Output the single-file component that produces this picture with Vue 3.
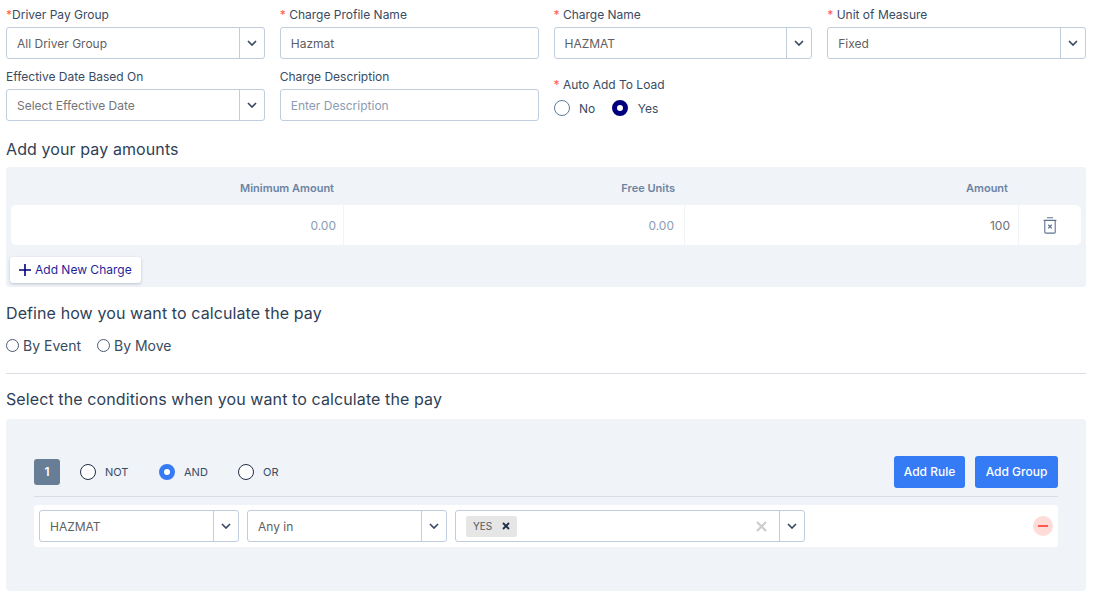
<script setup>
const chevron = 'M1 1l4 4 4-4'
</script>

<template>
  <div class="page">
    <div class="form-grid">
      <div class="field">
        <label class="label"><span class="req">*</span>Driver Pay Group</label>
        <div class="select"><span class="value">All Driver Group</span><span class="arrow"><svg width="10" height="6" viewBox="0 0 10 6"><path :d="chevron" /></svg></span></div>
      </div>
      <div class="field">
        <label class="label"><span class="req">* </span>Charge Profile Name</label>
        <div class="input"><span class="value">Hazmat</span></div>
      </div>
      <div class="field">
        <label class="label"><span class="req">* </span>Charge Name</label>
        <div class="select"><span class="value">HAZMAT</span><span class="arrow"><svg width="10" height="6" viewBox="0 0 10 6"><path :d="chevron" /></svg></span></div>
      </div>
      <div class="field">
        <label class="label"><span class="req">* </span>Unit of Measure</label>
        <div class="select"><span class="value">Fixed</span><span class="arrow"><svg width="10" height="6" viewBox="0 0 10 6"><path :d="chevron" /></svg></span></div>
      </div>
      <div class="field">
        <label class="label">Effective Date Based On</label>
        <div class="select"><span class="value muted">Select Effective Date</span><span class="arrow"><svg width="10" height="6" viewBox="0 0 10 6"><path :d="chevron" /></svg></span></div>
      </div>
      <div class="field">
        <label class="label">Charge Description</label>
        <div class="input"><span class="value placeholder">Enter Description</span></div>
      </div>
      <div class="field auto-field">
        <label class="label"><span class="req">* </span>Auto Add To Load</label>
        <div class="auto-radios">
          <span class="opt"><i class="radio big"></i>No</span>
          <span class="opt"><i class="radio big navy"></i>Yes</span>
        </div>
      </div>
    </div>

    <h3 class="heading pay-heading">Add your pay amounts</h3>
    <section class="charges">
      <div class="charge-cols charge-head">
        <span>Minimum Amount</span>
        <span>Free Units</span>
        <span class="amount-head">Amount</span>
        <span></span>
      </div>
      <div class="charge-cols charge-row">
        <span class="num first">0.00</span>
        <span class="num second">0.00</span>
        <span class="num dark">100</span>
        <span class="trash">
          <svg width="14" height="17" viewBox="0 0 14 17" fill="none" stroke="#5f7390" stroke-width="1.1">
            <path d="M4 .8h6M.6 3.4h12.8M1.8 3.4v11.8c0 .5.4.9.9.9h8.6c.5 0 .9-.4.9-.9V3.4" />
            <path d="M5.3 7.8l3.4 3.6M8.7 7.8l-3.4 3.6" stroke-width="1.3" />
          </svg>
        </span>
      </div>
      <button class="add-charge" type="button">
        <svg width="12" height="12" viewBox="0 0 12 12"><path d="M6 0v12M0 6h12" stroke="#00007f" stroke-width="1.6" /></svg>
        <span class="add-text">Add New Charge</span>
      </button>
    </section>

    <h3 class="heading define-heading">Define how you want to calculate the pay</h3>
    <div class="by-radios">
      <span class="by"><i class="radio small"></i>By Event</span>
      <span class="by"><i class="radio small"></i>By Move</span>
    </div>
    <hr class="rule" />

    <h3 class="heading cond-heading">Select the conditions when you want to calculate the pay</h3>
    <section class="builder">
      <div class="builder-top">
        <span class="badge">1</span>
        <span class="cond"><i class="radio cond-radio"></i>NOT</span>
        <span class="cond"><i class="radio cond-radio blue"></i>AND</span>
        <span class="cond"><i class="radio cond-radio"></i>OR</span>
        <span class="actions">
          <button class="primary rule-btn" type="button">Add Rule</button>
          <button class="primary group-btn" type="button">Add Group</button>
        </span>
      </div>
      <div class="rule-row">
        <div class="select rule-select"><span class="value">HAZMAT</span><span class="arrow"><svg width="10" height="6" viewBox="0 0 10 6"><path :d="chevron" /></svg></span></div>
        <div class="select rule-select"><span class="value">Any in</span><span class="arrow"><svg width="10" height="6" viewBox="0 0 10 6"><path :d="chevron" /></svg></span></div>
        <div class="select multi">
          <span class="chip">YES<svg width="8" height="8" viewBox="0 0 8 8"><path d="M1 1l6 6M7 1L1 7" stroke="#1f2f46" stroke-width="1.8" /></svg></span>
          <svg class="clear" width="11" height="11" viewBox="0 0 11 11"><path d="M1 1l9 9M10 1L1 10" stroke="#cccccc" stroke-width="2.2" /></svg>
          <span class="arrow"><svg width="10" height="6" viewBox="0 0 10 6"><path :d="chevron" /></svg></span>
        </div>
        <span class="remove"><i></i></span>
      </div>
    </section>
  </div>
</template>

<style>
html, body { margin: 0; background: #fff; }
</style>

<style scoped>
.page {
  width: 1080px;
  height: 594px;
  padding-left: 6px;
  overflow: hidden;
  font-family: Inter, "Liberation Sans", sans-serif;
  font-size: 12px;
  color: #394b63;
}
.form-grid {
  display: grid;
  grid-template-columns: repeat(4, 1fr);
  column-gap: 15px;
  row-gap: 11px;
  padding-top: 8px;
}
.field { display: flex; flex-direction: column; }
.label { height: 14px; line-height: 14px; margin-bottom: 5px; color: #394b63; white-space: pre; }
.req { color: #ff5a4f; }
.select, .input {
  display: flex;
  align-items: center;
  height: 32px;
  box-sizing: border-box;
  background: #fff;
  border: 1px solid #bfcddc;
  border-radius: 3px;
}
.value { flex: 1; padding-left: 10px; color: #5f6062; white-space: nowrap; }
.muted { color: #757577; }
.placeholder { color: #8b9cb3; }
.arrow {
  width: 24px;
  height: 100%;
  display: flex;
  align-items: center;
  justify-content: center;
  border-left: 1px solid #bfcddc;
  flex: none;
}
.arrow path { fill: none; stroke: #394b63; stroke-width: 1.7; }
.auto-field { padding-top: 8px; }
.auto-field .label { margin-bottom: 8px; }
.auto-radios { display: flex; align-items: center; gap: 16.5px; height: 16px; }
.opt { display: inline-flex; align-items: center; gap: 9.5px; }
.radio { display: block; box-sizing: border-box; border-radius: 50%; background: #fff; flex: none; }
.big { width: 16px; height: 16px; border: 1px solid #5f7a9a; }
.navy { border: 5px solid #00007f; margin-right: 0.5px; }
.small { width: 13px; height: 13px; border: 1px solid #4a5a70; }
.heading { margin: 0; font-weight: 400; font-size: 16px; line-height: 18px; color: #2e3f57; letter-spacing: 0.1px; }
.pay-heading { margin-top: 19px; }
.charges {
  height: 120px;
  box-sizing: border-box;
  margin-top: 9px;
  padding: 0 5px;
  background: #f0f3f8;
  border-radius: 3px;
  position: relative;
}
.charge-cols { display: grid; grid-template-columns: 333px 341px 334px 62px; }
.charge-head { height: 38px; box-sizing: border-box; padding-top: 4px; align-items: center; font-size: 11px; font-weight: 600; color: #6b84a3; text-align: right; }
.charge-head span { padding-right: 10px; }
.charge-head .amount-head { padding-right: 11px; }
.charge-row { height: 40px; background: #fff; border-radius: 5px; }
.num {
  display: flex;
  align-items: center;
  justify-content: flex-end;
  padding-right: 8px;
  border-right: 1px solid #f0f3f8;
  color: #8b9cb3;
}
.first { padding-right: 7px; }
.second { padding-right: 10px; }
.dark { color: #6a6f78; }
.trash { display: flex; align-items: center; justify-content: center; padding-right: 1px; }
.add-charge {
  display: inline-flex;
  align-items: center;
  gap: 4px;
  position: absolute;
  left: 4px;
  top: 90px;
  height: 26px;
  width: 131px;
  box-sizing: border-box;
  padding: 0 0 0 9px;
  border: 0;
  border-radius: 3px;
  background: #fff;
  box-shadow: 0 1px 3px rgba(30, 50, 80, 0.25);
  font: 400 12px Inter, sans-serif;
  color: #1f1f99;
}
.add-text { position: relative; top: -1px; }
.define-heading { margin-top: 17px; }
.by-radios { display: flex; gap: 16px; margin-top: 15px; height: 16px; align-items: center; font-size: 14px; color: #394b63; }
.by { display: inline-flex; align-items: center; gap: 4px; }
.rule { margin: 20px 0 0; border: 0; border-top: 1px solid #d9dde5; }
.cond-heading { margin-top: 16px; }
.builder {
  height: 172px;
  box-sizing: border-box;
  margin-top: 11px;
  padding: 37px 28px 0;
  background: #f0f3f8;
  border-radius: 4px;
}
.builder-top {
  display: flex;
  align-items: center;
  height: 41px;
  box-sizing: border-box;
  padding-bottom: 9px;
  border-bottom: 1px solid #d9dde5;
  font-size: 11px;
  color: #394b63;
}
.badge {
  width: 26px;
  height: 26px;
  border-radius: 3px;
  background: #687d96;
  color: #fff;
  font-weight: 600;
  font-size: 12px;
  display: flex;
  align-items: center;
  justify-content: center;
  margin-right: 20px;
}
.cond { display: inline-flex; align-items: center; gap: 9px; }
.cond:nth-of-type(2), .cond:nth-of-type(3) { width: 79px; }
.cond-radio { width: 16px; height: 16px; border: 1.3px solid #1f2f46; }
.blue { border: 5px solid #367bf6; }
.actions { margin-left: auto; display: flex; gap: 10px; }
.primary {
  height: 32px;
  box-sizing: border-box;
  padding: 0;
  border: 0;
  border-radius: 3px;
  background: #367bf6;
  color: #fff;
  font: 500 12px Inter, sans-serif;
}
.rule-btn { width: 71px; }
.group-btn { width: 83px; }
.rule-row {
  display: flex;
  align-items: center;
  gap: 8px;
  height: 42px;
  box-sizing: border-box;
  margin-top: 8px;
  padding: 0 5px;
  background: #fff;
  border-radius: 3px;
}
.rule-select { width: 200px; flex: none; }
.multi { width: 350px; flex: none; position: relative; padding-left: 10px; }
.chip {
  display: inline-flex;
  align-items: center;
  gap: 10px;
  width: 51px;
  height: 21px;
  box-sizing: border-box;
  padding-left: 7px;
  border-radius: 2px;
  background: #e6e6e6;
  font-size: 10px;
  color: #58595b;
}
.clear { margin-left: auto; margin-right: 12px; }
.remove {
  margin-left: auto;
  width: 20px;
  height: 20px;
  border-radius: 50%;
  background: #ffdcd8;
  display: flex;
  align-items: center;
  justify-content: center;
}
.remove i { display: block; width: 10px; height: 2px; background: #ff5a4f; }
</style>
